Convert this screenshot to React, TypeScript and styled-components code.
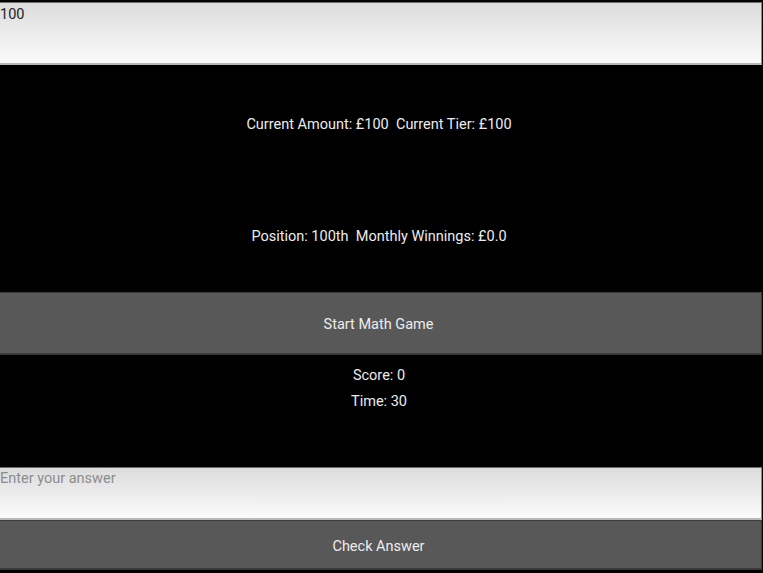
import { createGlobalStyle, styled } from 'styled-components'

const GlobalStyle = createGlobalStyle`
  html, body {
    margin: 0;
    padding: 0;
    background: #000;
  }
  body {
    font-family: Roboto, "Noto Sans", sans-serif;
  }
`

const Screen = styled.div`
  width: 762px;
  height: 573px;
  padding-top: 2px;
  box-sizing: border-box;
  display: flex;
  flex-direction: column;
  background: #000;
  overflow: hidden;
`

// multi-line field so the text sits at the top like the reference
const Field = styled.textarea<{ $h: number; $pad: number }>`
  display: block;
  width: 100%;
  height: ${(p) => p.$h}px;
  box-sizing: border-box;
  margin: 0;
  padding: ${(p) => p.$pad}px 0 0 0;
  border: none;
  border-top: 1px solid #6a6a6a;
  border-right: 1px solid #8a8a8a;
  border-bottom: 2px solid #b8b8b8;
  background: linear-gradient(to bottom, #dcdcdc, #fbfbfb);
  font-family: Roboto, "Noto Sans", sans-serif;
  font-size: 14.5px;
  line-height: 17px;
  color: #222;
  resize: none;
  overflow: hidden;
  outline: none;

  &::placeholder {
    color: #8c8c8c;
  }
`

const Stats = styled.div`
  height: 227px;
  padding-top: 3px;
  box-sizing: border-box;
  display: grid;
  grid-template-rows: 1fr 1fr;
`

const Label = styled.div`
  display: flex;
  align-items: center;
  justify-content: center;
  padding-right: 4px;
  color: #ececec;
  font-size: 14.5px;
  white-space: pre;
`

const Button = styled.button<{ $h: number; $pad: number }>`
  height: ${(p) => p.$h}px;
  width: 100%;
  margin: 0;
  padding: ${(p) => p.$pad}px 4px 0 0;
  box-sizing: border-box;
  border: none;
  border-top: 1px solid #3c3c3c;
  border-bottom: 2px solid #3a3a3a;
  border-right: 1px solid #3a3a3a;
  background: #585858;
  color: #ededed;
  font-family: Roboto, "Noto Sans", sans-serif;
  font-size: 14.5px;
  cursor: pointer;
`

const GameInfo = styled.div`
  height: 112px;
  display: flex;
  flex-direction: column;
  align-items: center;
  padding: 12px 4px 0 0;
  box-sizing: border-box;
  gap: 9px;
  color: #ececec;
  font-size: 14.5px;
  line-height: 17px;
`

const App = () => {
  return (
    <>
      <GlobalStyle />
      <Screen>
        <Field $h={63} $pad={3} defaultValue="100" />
        <Stats>
          <Label>{'Current Amount: £100  Current Tier: £100'}</Label>
          <Label>{'Position: 100th  Monthly Winnings: £0.0'}</Label>
        </Stats>
        <Button $h={63} $pad={3}>Start Math Game</Button>
        <GameInfo>
          <div>Score: 0</div>
          <div>Time: 30</div>
        </GameInfo>
        <Field $h={53} $pad={2} placeholder="Enter your answer" />
        <Button $h={50} $pad={4}>Check Answer</Button>
      </Screen>
    </>
  )
}

export default App
